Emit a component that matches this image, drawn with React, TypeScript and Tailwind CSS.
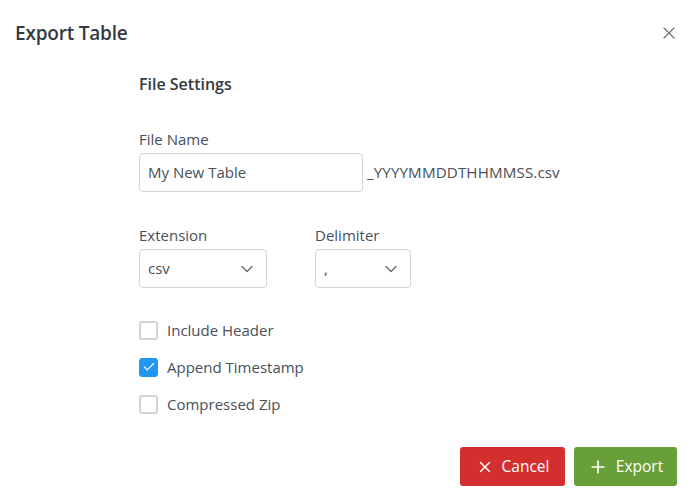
import { X, Plus, ChevronDown, Check } from "lucide-react"

function Checkbox({ label, checked }: { label: string; checked?: boolean }) {
    return (
        <label className="flex items-center gap-[9px] h-[18px]">
            <span
                className={
                    checked
                        ? "w-[19px] h-[19px] rounded-[3px] bg-[#2196f3] border border-[#2196f3] flex items-center justify-center"
                        : "w-[19px] h-[19px] rounded-[3px] bg-white border-2 border-[#ced4da]"
                }
            >
                {checked && <Check className="w-[14px] h-[14px] text-white" strokeWidth={2} />}
            </span>
            <span className="text-[15px] text-[#495057]">{label}</span>
        </label>
    )
}

function Select({ value, width }: { value: string; width: string }) {
    return (
        <div
            className={`${width} h-[39px] border border-[#ced4da] rounded-[4px] flex items-center justify-between pl-[8px] pr-[9px]`}
        >
            <span className="text-[15px] text-[#495057]">{value}</span>
            <ChevronDown className="w-[20px] h-[20px] text-[#6c757d]" strokeWidth={1.75} />
        </div>
    )
}

export default function App() {
    return (
        <div
            className="w-[697px] h-[499px] bg-white text-[#495057] flex flex-col"
            style={{ fontFamily: '"Open Sans", "Noto Sans", sans-serif' }}
        >
            <div className="flex items-center justify-between pl-[15px] pr-[18px] h-[66px]">
                <h1 className="text-[19px] font-semibold text-[#343a40] tracking-[-0.2px]">Export Table</h1>
                <X className="w-[20px] h-[20px] text-[#6c757d]" strokeWidth={1.5} />
            </div>

            <div className="pl-[139px] flex flex-col">
                <h2 className="text-[16px] font-semibold text-[#343a40] mt-[7px] leading-[22px]">File Settings</h2>

                <div className="mt-[34px] text-[15px] leading-[20px]">File Name</div>
                <div className="mt-[4px] flex items-center gap-[4px]">
                    <div className="w-[224px] h-[39px] border border-[#ced4da] rounded-[4px] flex items-center px-[8px]">
                        <span className="text-[15px] text-[#495057]">My New Table</span>
                    </div>
                    <span className="text-[15.2px] text-[#495057] tracking-[0.1px]">_YYYYMMDDTHHMMSS.csv</span>
                </div>

                <div className="mt-[33px] flex gap-[48px]">
                    <div className="flex flex-col gap-[4px]">
                        <span className="text-[15px] leading-[20px]">Extension</span>
                        <Select value="csv" width="w-[128px]" />
                    </div>
                    <div className="flex flex-col gap-[4px]">
                        <span className="text-[15px] leading-[20px]">Delimiter</span>
                        <Select value="," width="w-[96px]" />
                    </div>
                </div>

                <div className="mt-[33px] flex flex-col gap-[19px]">
                    <Checkbox label="Include Header" />
                    <Checkbox label="Append Timestamp" checked />
                    <Checkbox label="Compressed Zip" />
                </div>
            </div>

            <div className="mt-auto mb-[13px] flex justify-end gap-[9px] pr-[20px]">
                <button className="w-[105px] h-[39px] rounded-[3px] bg-[#d32f2f] text-white flex items-center justify-center gap-[8px] text-[15.5px]">
                    <X className="w-[18px] h-[18px]" strokeWidth={2} />
                    Cancel
                </button>
                <button className="w-[103px] h-[39px] rounded-[3px] bg-[#689f38] text-white flex items-center justify-center gap-[8px] text-[15.5px]">
                    <Plus className="w-[20px] h-[20px]" strokeWidth={2} />
                    Export
                </button>
            </div>
        </div>
    )
}
